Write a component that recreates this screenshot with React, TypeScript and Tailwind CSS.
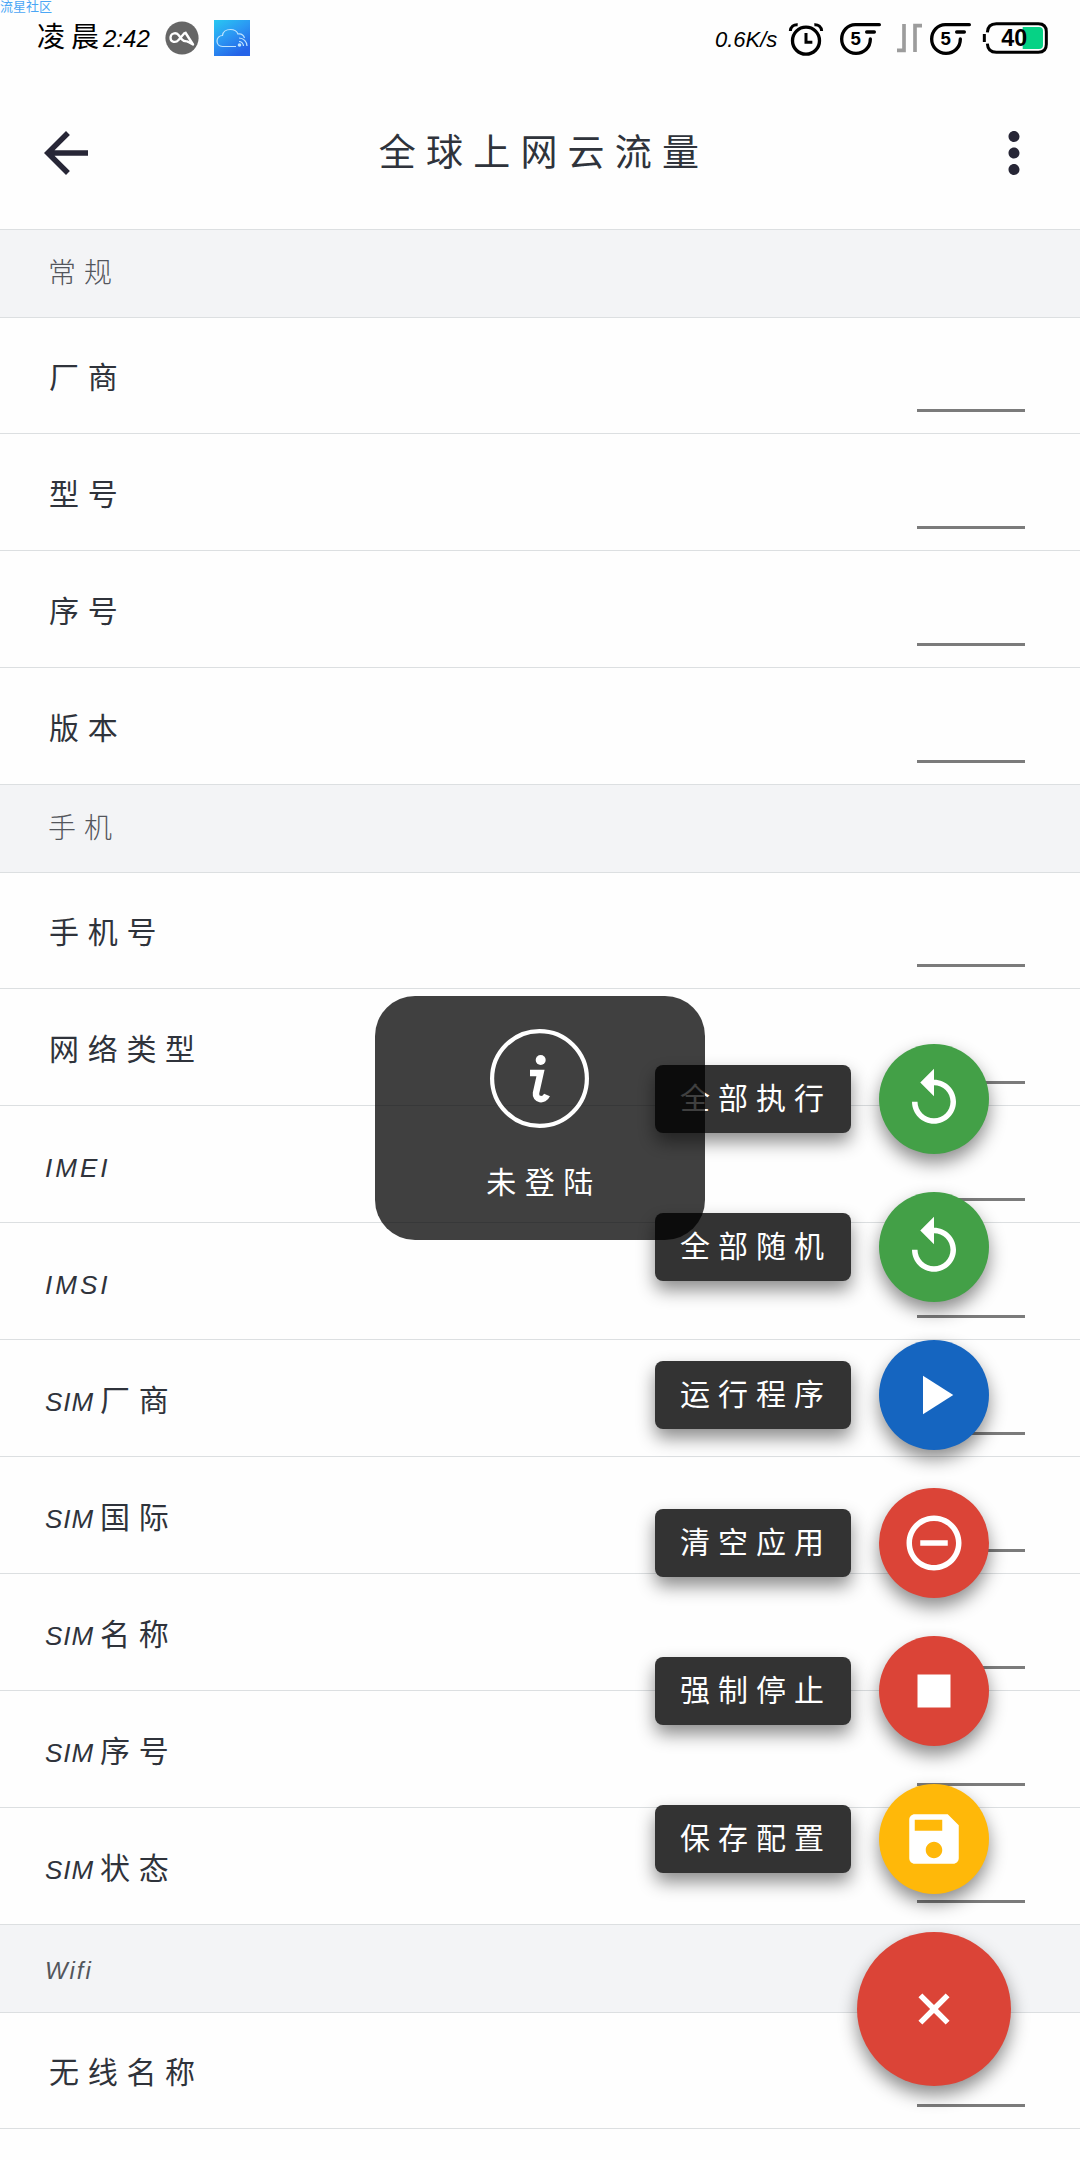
import React from "react";

const GENERAL = ["厂商", "型号", "序号", "版本"];
const PHONE = ["手机号", "网络类型", "IMEI", "IMSI", "SIM厂商", "SIM国际", "SIM名称", "SIM序号", "SIM状态"];
const WIFI = ["无线名称"];

const ICONS = {
  replay: "M12 5V1L7 6l5 5V7c3.31 0 6 2.69 6 6s-2.69 6-6 6-6-2.69-6-6H4c0 4.42 3.58 8 8 8s8-3.58 8-8-3.58-8-8-8z",
  play: "M8 5v14l11-7z",
  minus:
    "M7 11v2h10v-2H7zm5-9C6.48 2 2 6.48 2 12s4.48 10 10 10 10-4.48 10-10S17.52 2 12 2zm0 18c-4.41 0-8-3.59-8-8s3.59-8 8-8 8 3.59 8 8-3.59 8-8 8z",
  stop: "M6 6h12v12H6z",
  save: "M17 3H5c-1.11 0-2 .9-2 2v14c0 1.1.89 2 2 2h14c1.1 0 2-.9 2-2V7l-4-4zm-5 16c-1.66 0-3-1.34-3-3s1.34-3 3-3 3 1.34 3 3-1.34 3-3 3zm3-10H5V5h10v4z",
  add: "M19 13h-6v6h-2v-6H5v-2h6V5h2v6h6v2z",
  back: "M20 11H7.83l5.59-5.59L12 4l-8 8 8 8 1.41-1.41L7.83 13H20v-2z",
  more: "M12 8c1.1 0 2-.9 2-2s-.9-2-2-2-2 .9-2 2 .9 2 2 2zm0 2c-1.1 0-2 .9-2 2s.9 2 2 2 2-.9 2-2-.9-2-2-2zm0 6c-1.1 0-2 .9-2 2s.9 2 2 2 2-.9 2-2-.9-2-2-2z",
};

const ACTIONS = [
  { label: "全部执行", color: "bg-[#43a047]", icon: ICONS.replay },
  { label: "全部随机", color: "bg-[#43a047]", icon: ICONS.replay },
  { label: "运行程序", color: "bg-[#1565c0]", icon: ICONS.play },
  { label: "清空应用", color: "bg-[#db4437]", icon: ICONS.minus },
  { label: "强制停止", color: "bg-[#db4437]", icon: ICONS.stop },
  { label: "保存配置", color: "bg-[#ffb809]", icon: ICONS.save },
];

function Icon({ path, className = "" }: { path: string; className?: string }) {
  return (
    <svg viewBox="0 0 24 24" fill="currentColor" className={`size-[66px] shrink-0 ${className}`}>
      <path d={path} />
    </svg>
  );
}

function Signal() {
  return (
    <svg viewBox="414 60 132 108" className="h-9 w-11" fill="none" stroke="#000" strokeWidth="10" strokeLinecap="round">
      <path d="M538 74H466C443 74 425 93 425 117s18 43 43 43c23 0 43-16 43-43" />
      <path d="M500 96H523" />
      <text x="467" y="136" textAnchor="middle" fontSize="56" fontWeight="700" fill="#000" stroke="none" fontFamily="Liberation Sans, sans-serif">
        5
      </text>
    </svg>
  );
}

function StatusBar() {
  return (
    <div className="flex h-[76px] items-center pl-[37px] pr-[31px] text-black">
      <span className="text-[28px] tracking-[6px]">凌晨</span>
      <span className="relative top-px -ml-0.5 w-[46px] text-[24px] italic whitespace-nowrap">2:42</span>
      <svg viewBox="0 0 34 34" className="ml-[16px] size-[34px] shrink-0" fill="none">
        <circle cx="17" cy="17" r="16.6" fill="#666" />
        <path
          d="M20 11.500L13.500 19C11 22 5.500 21.500 5.500 16.800S11 11 13.500 14L17 18.500C18.500 20.500 21 20.500 23 20.300"
          stroke="#fff"
          strokeWidth="2.300"
          strokeLinejoin="round"
        />
        <path d="M20 11L28 23.500L22.500 20.500" stroke="#fff" strokeWidth="2.400" strokeLinejoin="round" />
      </svg>
      <svg viewBox="0 0 36 36" className="ml-[15px] size-9 shrink-0" fill="none">
        <defs>
          <linearGradient id="tile" x1="0" y1="0" x2="0.6" y2="1">
            <stop offset="0" stopColor="#28c8f2" />
            <stop offset="0.5" stopColor="#2b98f3" />
            <stop offset="1" stopColor="#2563e8" />
          </linearGradient>
        </defs>
        <path d="M0 0h36v36H0z" fill="url(#tile)" />
        <path
          d="M22 26.500H8.500C5 26.500 3 24 3 21s2.300-5.500 5.500-5.500C9 11.500 12.500 9.500 16.500 9.500S23 11.500 24 14c3-.5 5.500 1 6.500 4"
          stroke="#bfe4ff"
          strokeWidth="1.200"
        />
        <g stroke="#bfe4ff" strokeWidth="1.200">
          <path d="M25 21.500a4.500 4.500 0 0 1 4.500 4.500" />
          <path d="M25 18a8 8 0 0 1 8 8" />
        </g>
        <circle cx="25.500" cy="25" r="1.800" fill="#bfe4ff" />
      </svg>
      <span className="relative top-px ml-auto w-[73px] text-[22px] font-light italic whitespace-nowrap">0.6K/s</span>
      <svg viewBox="264 60 108 108" className="size-9" fill="none" stroke="#000">
        <circle cx="318" cy="122" r="40.500" strokeWidth="10" />
        <path d="M318 99V127H337" strokeWidth="9" />
        <path d="M271 93C272 81 281 73 293 74M365 93C364 81 355 73 343 74" strokeWidth="9" />
      </svg>
      <div className="ml-[14px]">
        <Signal />
      </div>
      <svg viewBox="588 60 81 108" className="ml-[14px] h-9 w-[27px]" fill="none" stroke="#9c9c9c" strokeWidth="11">
        <path d="M612 72V151H591M645 156V77H666" />
      </svg>
      <div className="ml-[5px]">
        <Signal />
      </div>
      <svg viewBox="846 60 201 108" className="ml-[10px] h-9 w-[67px]" fill="none">
        <path d="M968 81h49q12 0 12 12v42q0 12-12 12h-49z" fill="#06d285" />
        <path
          d="M862 97C863 80 872 71 889 71H1015Q1039 71 1039 95V133Q1039 157 1015 157H889C872 157 863 148 862 131"
          stroke="#000"
          strokeWidth="9"
        />
        <path d="M853 102V126" stroke="#000" strokeWidth="9" />
        <text x="943" y="139" textAnchor="middle" fontSize="70" fontWeight="700" fill="#000" fontFamily="Liberation Sans, sans-serif">
          40
        </text>
      </svg>
    </div>
  );
}

function Label({ text }: { text: string }) {
  const latin = text.match(/^[A-Za-z]+/)?.[0] ?? "";
  const rest = text.slice(latin.length);
  return (
    <span className="relative top-[2px] flex items-center whitespace-nowrap">
      {latin && (
        <span className={`relative top-[2px] text-[26px] italic ${rest ? "w-[51px] tracking-[1px]" : "tracking-[3px]"}`}>
          {latin}
        </span>
      )}
      {rest && <span className="ml-1 text-[30px] tracking-[8.7px]">{rest}</span>}
    </span>
  );
}

function Section({ title, rows }: { title: string; rows: string[] }) {
  const isLatin = /^[A-Za-z]/.test(title);
  return (
    <section>
      <h2 className="flex h-[88px] items-center border-b border-[#dcdfe1] bg-[#f3f4f6] pl-[45px] font-light text-[#53565c]">
        {isLatin ? (
          <span className="relative top-0.5 text-[24px] italic tracking-[2px]">{title}</span>
        ) : (
          <span className="ml-[3px] text-[28px] tracking-[8px]">{title}</span>
        )}
      </h2>
      {rows.map((row) => (
        <div
          key={row}
          className="flex h-[117px] items-center justify-between border-b border-[#dcdfe1] pr-[55px] pl-[45px] first-of-type:h-[116px]"
        >
          <Label text={row} />
          <div className="mb-[21px] h-[3px] w-[108px] self-end bg-[#7b7b7b]" />
        </div>
      ))}
    </section>
  );
}

function FloatingMenu() {
  return (
    <div className="absolute top-[1044px] right-[69px] flex flex-col items-end gap-[38px] text-white">
      {ACTIONS.map((a) => (
        <div key={a.label} className="mr-[22px] flex items-center gap-7">
          <span className="flex h-[68px] w-[196px] items-center rounded-lg bg-[#333] pb-0.5 pl-[25px] text-[30px] tracking-[8px] whitespace-nowrap shadow-[0_9px_18px_rgba(0,0,0,0.45)]">
            {a.label}
          </span>
          <button className={`flex size-[110px] items-center justify-center rounded-full shadow-[0_9px_18px_rgba(0,0,0,0.45)] ${a.color}`}>
            <Icon path={a.icon} />
          </button>
        </div>
      ))}
      <button className="flex size-[154px] items-center justify-center rounded-full bg-[#db4437] shadow-[0_9px_18px_rgba(0,0,0,0.45)]">
        <Icon path={ICONS.add} className="rotate-45" />
      </button>
    </div>
  );
}

function Toast() {
  return (
    <div className="absolute top-[996px] left-[375px] flex h-[244px] w-[330px] flex-col items-center rounded-[40px] bg-black/75 pt-[33px] text-white">
      <svg viewBox="0 0 99 99" className="mr-px size-[99px]" fill="none" stroke="#fff">
        <circle cx="49.500" cy="49.500" r="47.400" strokeWidth="4.200" />
        <circle cx="50.700" cy="31" r="5" fill="#fff" stroke="none" />
        <path d="M40 44H50.500L46 64C45 71 54 72.500 57 66" strokeWidth="6.500" strokeLinecap="butt" />
      </svg>
      <span className="mt-[32px] ml-2 text-[30px] leading-[46px] tracking-[8.500px]">未登陆</span>
    </div>
  );
}

export default function App() {
  return (
    <div className="relative h-[2160px] w-[1080px] overflow-hidden bg-[#fefefe] font-['Liberation_Sans','Noto_Sans_CJK_SC',sans-serif] text-[#2f333b]">
      <div className="absolute top-0 left-0 text-[13px] leading-[13px] text-[#4ba6f5]">流星社区</div>
      <StatusBar />
      <header className="flex h-[154px] items-center justify-between border-b border-[#dcdfe1] px-[33px] text-[#272636]">
        <Icon path={ICONS.back} />
        <h1 className="mt-[3px] ml-[8px] text-[37px] tracking-[10.200px] text-[#2f333b]">全球上网云流量</h1>
        <Icon path={ICONS.more} />
      </header>
      <main>
        <Section title="常规" rows={GENERAL} />
        <Section title="手机" rows={PHONE} />
        <Section title="Wifi" rows={WIFI} />
      </main>
      <FloatingMenu />
      <Toast />
    </div>
  );
}
